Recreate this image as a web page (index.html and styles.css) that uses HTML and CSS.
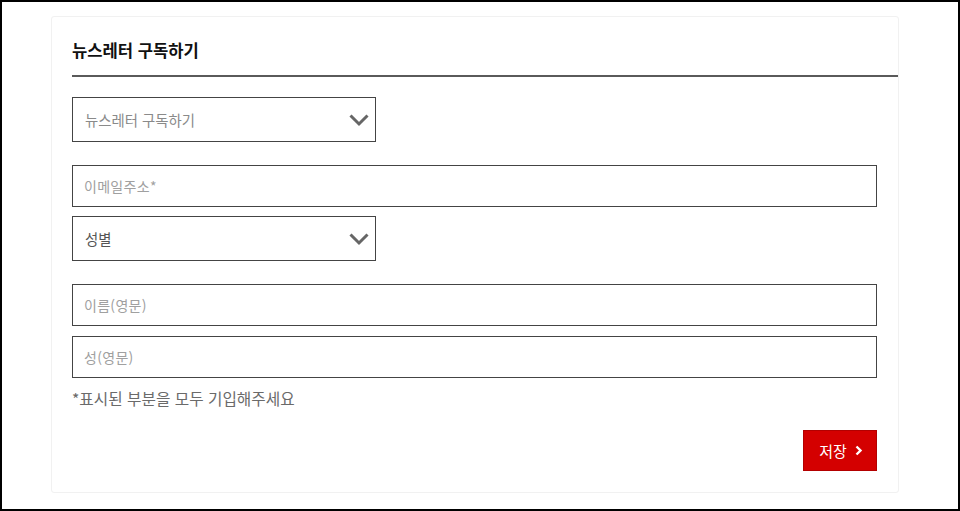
FILE: index.html
```html
<!DOCTYPE html>
<html lang="ko">
<head>
<meta charset="utf-8">
<link rel="stylesheet" href="styles.css">
</head>
<body>
<div class="frame">
  <div class="card">
    <div class="head"><h2 class="title">뉴스레터 구독하기</h2></div>
    <form class="form">
      <div class="select sel-first">
        <span class="sel-text muted">뉴스레터 구독하기</span>
        <svg class="chev" width="20" height="14" viewBox="0 0 20 14"><polyline points="1.5,2.5 10,11 18.5,2.5" fill="none" stroke="#666" stroke-width="3"/></svg>
      </div>
      <div class="input gap-lg"><span class="ph">이메일주소*</span></div>
      <div class="select gap-sm">
        <span class="sel-text dark">성별</span>
        <svg class="chev" width="20" height="14" viewBox="0 0 20 14"><polyline points="1.5,2.5 10,11 18.5,2.5" fill="none" stroke="#666" stroke-width="3"/></svg>
      </div>
      <div class="input gap-lg"><span class="ph">이름(영문)</span></div>
      <div class="input gap-sm2"><span class="ph">성(영문)</span></div>
      <p class="note">*표시된 부분을 모두 기입해주세요</p>
      <div class="actions">
        <button type="button" class="save">저장 <svg width="8" height="11" viewBox="0 0 8 11"><polyline points="1.5,1.5 5.5,5.5 1.5,9.5" fill="none" stroke="#fff" stroke-width="2.4"/></svg></button>
      </div>
    </form>
  </div>
</div>
</body>
</html>
```
FILE: styles.css
```css
* { box-sizing: border-box; }
html, body { margin: 0; padding: 0; background: #fff; }
body { font-family: "Noto Sans CJK KR", "Noto Sans", sans-serif; }
.frame {
  width: 960px;
  height: 511px;
  border: 2px solid #000;
  padding: 14px 0 0 49px;
}
.card {
  width: 848px;
  height: 477px;
  border: 1px solid #f1f1f1;
  border-radius: 3px;
  padding-left: 20px;
}
.head {
  border-bottom: 2px solid #5a5a5a;
  padding-top: 23px;
  padding-bottom: 15px;
}
.title {
  margin: 0;
  font-size: 16.6px;
  line-height: 20px;
  font-weight: 700;
  color: #111;
}
.form {
  padding-right: 21px;
  display: flex;
  flex-direction: column;
  align-items: flex-start;
}
.select {
  width: 304px;
  height: 45px;
  border: 1px solid #444;
  display: flex;
  align-items: center;
  justify-content: space-between;
  padding: 0 6px 0 12px;
}
.sel-first { margin-top: 20px; }
.sel-text { font-size: 14.4px; }
.muted { color: #8a8a8a; }
.dark { color: #555; }
.chev { display: block; }
.input {
  width: 100%;
  height: 42px;
  border: 1px solid #444;
  display: flex;
  align-items: center;
  padding-left: 11px;
}
.ph { font-size: 14px; color: #a0a0a0; letter-spacing: 0.3px; }
.gap-lg { margin-top: 23px; }
.gap-sm { margin-top: 9px; }
.gap-sm2 { margin-top: 10px; }
.note {
  margin: 10px 0 0;
  font-size: 15.7px;
  line-height: 22px;
  color: #6a6a6a;
}
.actions {
  width: 100%;
  display: flex;
  justify-content: flex-end;
  margin-top: 20px;
}
.save {
  width: 74px;
  height: 41px;
  background: #d40000;
  border: 1px solid #b30000;
  color: #fff;
  font-family: inherit;
  font-size: 15px;
  display: flex;
  align-items: center;
  justify-content: center;
  gap: 8px;
  padding: 0 0 0 2px;
}
.save svg { display: block; }
```
